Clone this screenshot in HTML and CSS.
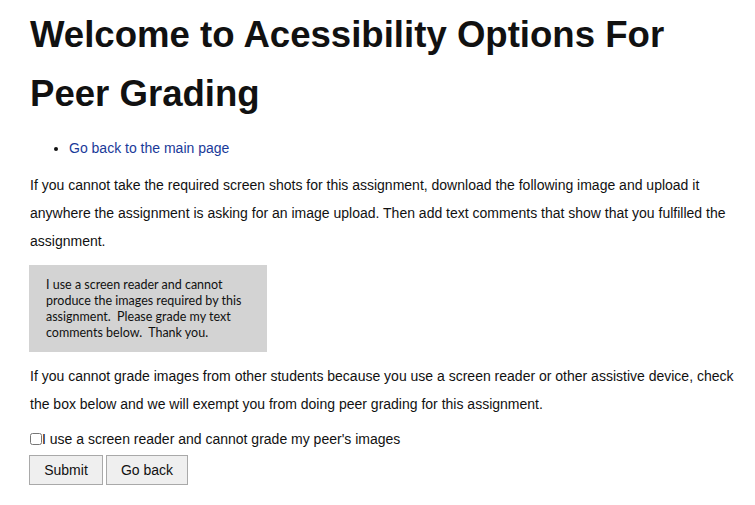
FILE: index.html
```html
<!DOCTYPE html>
<html lang="en">
<head>
<meta charset="utf-8">
<title>Acessibility Options For Peer Grading</title>
<link rel="stylesheet" href="styles.css">
</head>
<body>
<main class="page">
  <h1 class="title">Welcome to Acessibility Options For Peer Grading</h1>
  <ul class="links">
    <li><a href="#">Go back to the main page</a></li>
  </ul>
  <p class="text">If you cannot take the required screen shots for this assignment, download the following image and upload it anywhere the assignment is asking for an image upload. Then add text comments that show that you fulfilled the assignment.</p>
  <div class="sample">I use a screen reader and cannot produce the images required by this assignment.&nbsp; Please grade my text comments below.&nbsp; Thank you.</div>
  <p class="text">If you cannot grade images from other students because you use a screen reader or other assistive device, check the box below and we will exempt you from doing peer grading for this assignment.</p>
  <form class="form">
    <label class="check"><input type="checkbox" class="box">I use a screen reader and cannot grade my peer's images</label>
    <div class="buttons">
      <button type="button" class="btn btn-submit">Submit</button>
      <button type="button" class="btn btn-back">Go back</button>
    </div>
  </form>
</main>
</body>
</html>
```
FILE: styles.css
```css
html, body {
  margin: 0;
  padding: 0;
  background: #ffffff;
}
body {
  font-family: "Liberation Sans", Arial, sans-serif;
  color: #111111;
  font-size: 14px;
}
.page {
  padding: 5px 16px 0 30px;
}
.title {
  margin: 0;
  font-size: 36.6px;
  line-height: 59px;
  font-weight: bold;
  color: #111111;
}
.links {
  margin: 11px 0 9px 0;
  padding-left: 39px;
  line-height: 28px;
  font-size: 14px;
}
.links a {
  color: #1a3a99;
  text-decoration: none;
}
.text {
  margin: 0;
  line-height: 28px;
}
.sample {
  box-sizing: border-box;
  margin: 10px 0 10px -1px;
  width: 238px;
  height: 87px;
  background: #d3d3d3;
  padding: 12px 20px 0 17px;
  font-family: Lato, "Open Sans", sans-serif;
  font-size: 12.5px;
  line-height: 16px;
  color: #111111;
}
.form {
  margin: 12px 0 0 0;
}
.check {
  display: flex;
  align-items: center;
  height: 18px;
  line-height: 18px;
}
.box {
  margin: 0;
  width: 12px;
  height: 12px;
}
.buttons {
  display: flex;
  gap: 3px;
  margin: 7px 0 0 -1px;
}
.btn {
  height: 30px;
  font-family: "Liberation Sans", Arial, sans-serif;
  font-size: 14px;
  color: #111111;
  background: #efefef;
  border: 1px solid #a9a9a9;
  border-radius: 0;
  padding: 0;
}
.btn-submit { width: 74px; }
.btn-back { width: 82px; }
```
